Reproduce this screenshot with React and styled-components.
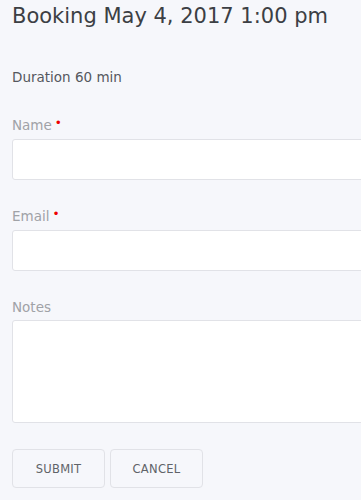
import React from "react"
import styled, { createGlobalStyle } from "styled-components"

const Global = createGlobalStyle`
  html, body {
    margin: 0;
    padding: 0;
    background: #f6f7fb;
    overflow: hidden;
  }
  body {
    font-family: "DejaVu Sans", "Noto Sans", sans-serif;
  }
`

const Page = styled.div`
  width: 361px;
  height: 500px;
  overflow: hidden;
  background: #f6f7fb;
  padding: 0 12px;
  box-sizing: border-box;
`

const Title = styled.h1`
  margin: 0;
  padding-top: 3px;
  font-size: 21px;
  font-weight: 400;
  line-height: 26px;
  color: #3c3f44;
  white-space: nowrap;
`

const Duration = styled.div`
  margin-top: 40px;
  font-size: 13.5px;
  line-height: 16px;
  color: #55585e;
`

const Form = styled.form`
  margin-top: 32px;
  display: flex;
  flex-direction: column;
  gap: 28px;
  width: 380px;
`

const Field = styled.label`
  display: flex;
  flex-direction: column;
  gap: 5px;
`

const Label = styled.span`
  font-size: 13.5px;
  line-height: 16px;
  color: #a0a2a7;
`

const Req = styled.span`
  color: #ee0000;
  font-size: 12px;
  position: relative;
  top: -3px;
  margin-left: 3px;
`

const Input = styled.input`
  height: 41px;
  box-sizing: border-box;
  border: 1px solid #e1e2e7;
  border-radius: 3px;
  background: #fff;
  outline: none;
`

const Area = styled.textarea`
  height: 103px;
  box-sizing: border-box;
  border: 1px solid #e1e2e7;
  border-radius: 3px;
  background: #fff;
  resize: none;
  outline: none;
`

const Actions = styled.div`
  margin-top: -2px;
  display: flex;
  gap: 5px;
`

const Button = styled.button`
  width: 93px;
  height: 39px;
  border: 1px solid #e1e2e7;
  border-radius: 4px;
  background: #f6f7fb;
  color: #606368;
  font-family: inherit;
  font-size: 11.5px;
  letter-spacing: 0.3px;
  text-transform: uppercase;
  cursor: pointer;
`

export default function App() {
  return (
    <Page>
      <Global />
      <Title>Booking May 4, 2017 1:00 pm</Title>
      <Duration>Duration 60 min</Duration>
      <Form onSubmit={(e) => e.preventDefault()}>
        <Field>
          <Label>
            Name<Req>•</Req>
          </Label>
          <Input type="text" />
        </Field>
        <Field>
          <Label>
            Email<Req>•</Req>
          </Label>
          <Input type="email" />
        </Field>
        <Field>
          <Label>Notes</Label>
          <Area />
        </Field>
        <Actions>
          <Button type="submit">Submit</Button>
          <Button type="button">Cancel</Button>
        </Actions>
      </Form>
    </Page>
  )
}
